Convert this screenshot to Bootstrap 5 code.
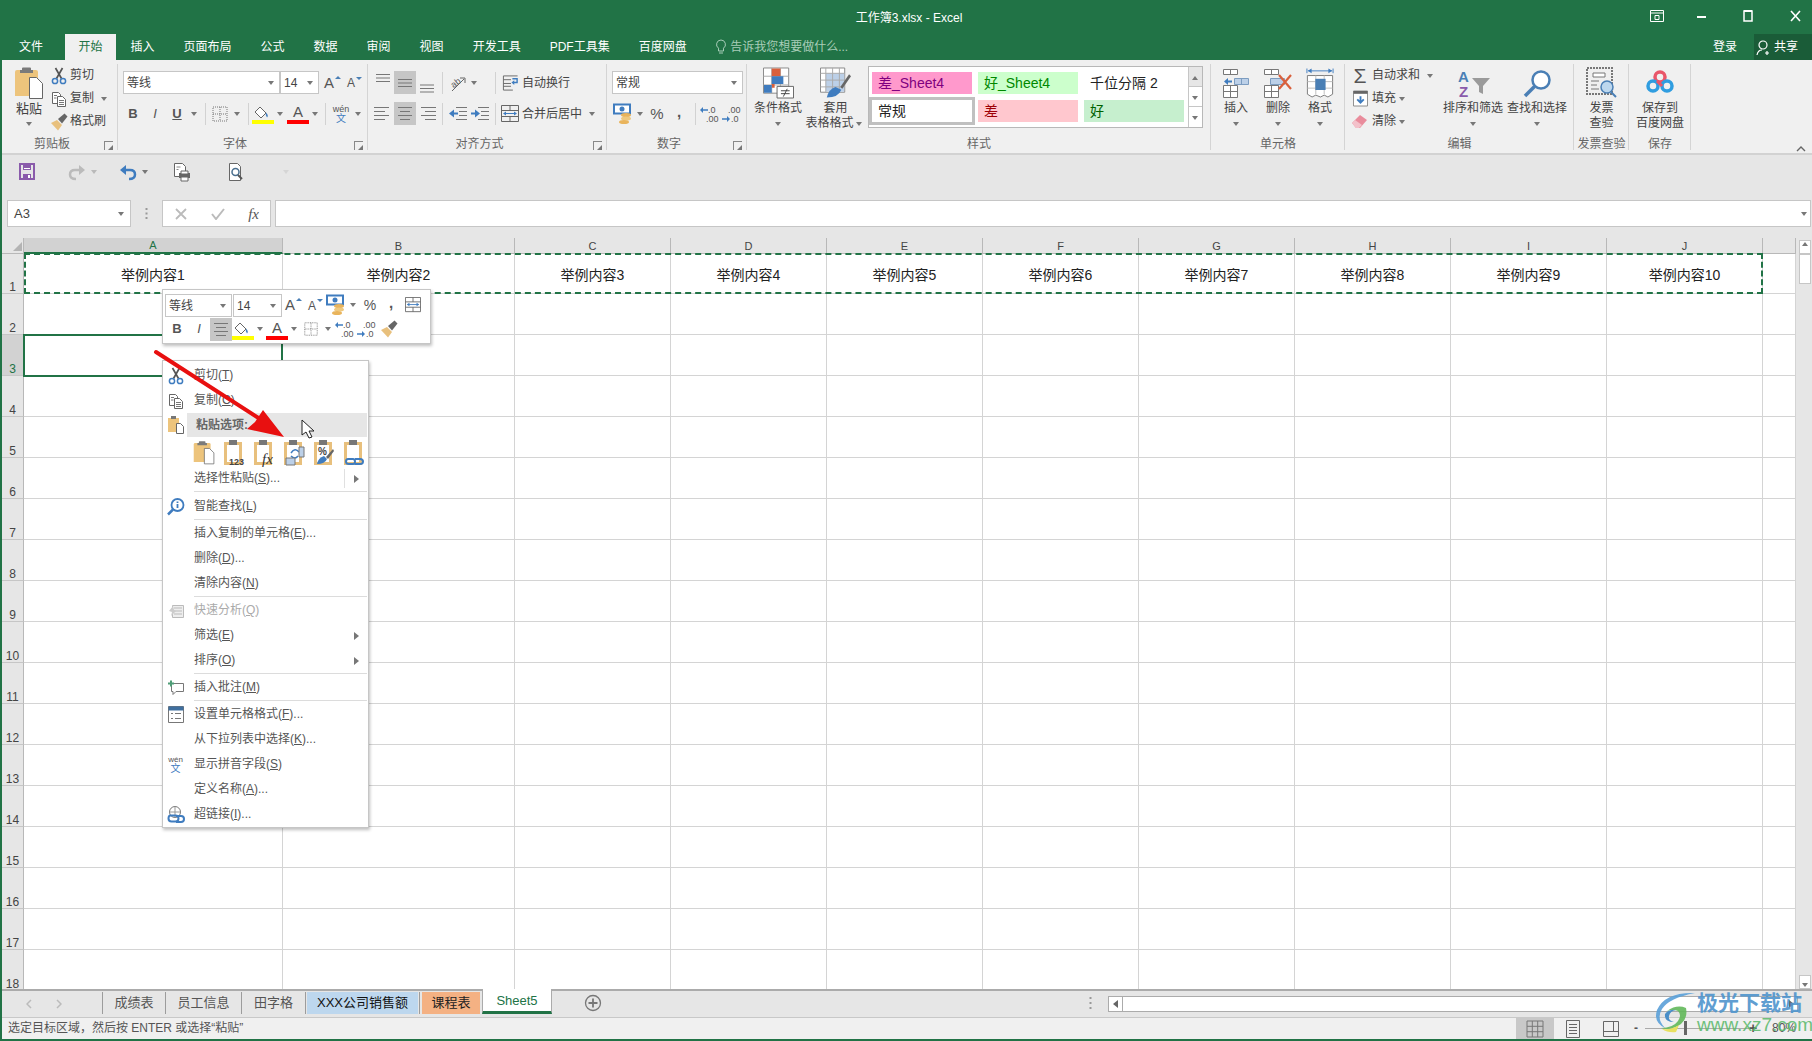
<!DOCTYPE html>
<html lang="zh-CN">
<head>
<meta charset="UTF-8">
<title>工作簿3.xlsx - Excel</title>
<link href="https://cdn.jsdelivr.net/npm/bootstrap@5.3.0/dist/css/bootstrap.min.css" rel="stylesheet">
<style>
html, body { margin: 0; height: 100%; overflow: hidden; }
body { font-family: "Liberation Sans", "Noto Sans CJK SC", sans-serif; font-size: 12px; color: #444; background: #e6e6e6; line-height: 1.2; }
svg { display: block; flex: none; }
.xl-win { position: relative; width: 1812px; height: 1041px; border-left: 2px solid #217346; border-bottom: 2px solid #217346; overflow: hidden; }

/* title + tabs */
.xl-title { height: 34px; background: #217346; color: #fff; }
.xl-title .ttl-txt { flex: 1; text-align: center; font-size: 12px; padding-top: 2px; }
.xl-left { width: 184px; }
.xl-ctrl { width: 180px; height: 34px; }
.xl-ctrl span { position: absolute; top: 9px; }
.xl-tabs { height: 26px; background: #217346; color: #fff; line-height: 26px; position: relative; }
.xl-tab { padding: 0 14.5px; white-space: nowrap; }
.xl-tab.first { padding: 0 15px; margin-left: 2px; }
.xl-tab.cur { background: #f0f0f0; color: #217346; padding: 0 13.5px; margin-left: 7px; }
.xl-tell { color: #a8cdb8; margin-left: 14px; gap: 3px; }
.xl-login { position: absolute; left: 1711px; top: 0; }
.xl-share { position: absolute; left: 1752px; top: 0; width: 58px; height: 26px; background: #1a5c38; gap: 2px; padding-left: 2px; }

/* ribbon */
.xl-ribbon { height: 95px; background: #f0f0f0; border-bottom: 2px solid #d2d2d2; position: relative; }
.rb-grp { position: relative; height: 93px; }
.rb-grp::after { content: ""; position: absolute; right: 0; top: 4px; height: 86px; width: 1px; background: #d4d4d4; }
.rb-body { height: 74px; }
.rb-lab { position: absolute; left: 0; right: 0; top: 76px; text-align: center; color: #666; line-height: 17px; }
.rb-lab.sh { right: 16px; }
.rb-launch { position: absolute; right: 5px; top: 81px; width: 9px; height: 9px; border-left: 1px solid #888; border-top: 1px solid #888; }
.rb-launch::after { content: ""; position: absolute; right: 0; bottom: 0; border-left: 5px solid transparent; border-bottom: 5px solid #777; }
.rows-3 { padding-top: 4px; }
.rows-3 > div { height: 23px; }
.rows-2 { padding-top: 11px; }
.rows-2 > div { height: 23px; margin-bottom: 8px; }
.tx1 { padding-top: 2px; }
.ib { width: 22px; height: 23px; flex: none; display: flex; align-items: center; justify-content: center; color: #555; }
.ib.on { background: #c6c6c6; }
.ib b, .ib i { font-size: 13px; font-family: "Liberation Sans", sans-serif; }
.cr { width: 12px; height: 12px; flex: none; position: relative; display: block; }
.cr::after { content: ""; position: absolute; left: 2.5px; top: 4px; border: 3.5px solid transparent; border-top: 4px solid #777; border-bottom: 0; }
.vs { width: 1px; height: 22px; background: #d2d2d2; flex: none; }
.xl-sel { background: #fff; border: 1px solid #c6c6c6; height: 23px; padding-left: 3px; position: relative; flex: none; font-size: 12px; color: #444; line-height: 23px; }
.xl-sel .cr { position: absolute; right: 2px; top: 5px; }
.bigb { flex: none; display: flex; flex-direction: column; align-items: center; color: #444; text-align: center; }
.big-ic { height: 41px; display: flex; align-items: flex-end; justify-content: center; padding-bottom: 2px; }
.big-tx { line-height: 15px; height: 15px; white-space: nowrap; display: flex; align-items: center; }
.sm-ic { width: 18px; flex: none; display: flex; justify-content: center; margin-right: 2px; }
.w-clip { width: 116px; } .w-font { width: 250px; } .w-align { width: 239px; } .w-num { width: 140px; }
.w-sty { width: 464px; } .w-cell { width: 134px; } .w-edit { width: 229px; } .w-inv { width: 55px; } .w-save { width: 62px; }
.rb-caret-up { position: absolute; left: 1794px; top: 85px; }
.gal { width: 335px; height: 62px; background: #fff; border: 1px solid #b8b8b8; margin-top: 6px; margin-left: 1px; flex: none; position: relative; }
.gal-grid { display: grid; grid-template-columns: repeat(3, 100px); grid-auto-rows: 22px; gap: 6px; padding: 5px 3px; font-size: 14px; }
.gal-c { padding-left: 6px; line-height: 22px; white-space: nowrap; }
.gal-norm { outline: 3px solid #c0c0c0; color: #222; }
.gal-sb { position: absolute; right: 0; top: 0; width: 14px; height: 60px; border-left: 1px solid #c6c6c6; }
.gal-sb div { height: 20px; border-bottom: 1px solid #c6c6c6; position: relative; }
.gal-sb div:first-child { background: #e6e6e6; }
.gal-sb .cr { position: absolute; left: 0; top: 5px; }
.sort-az { width: 14px; font-weight: 700; font-size: 15px; line-height: 15px; margin-right: 1px; }
.sort-az span { display: block; }

/* qat + formula bar */
.xl-qat { height: 45px; padding-bottom: 12px; background: #e6e6e6; }
.xl-fbar { height: 27px; background: #e6e6e6; margin-bottom: 11px; }
.fb-box { background: #fff; border: 1px solid #c6c6c6; height: 27px; position: relative; }
.fb-name { width: 124px; margin-left: 5px; padding-left: 6px; font-size: 13px; line-height: 25px; color: #444; }
.fb-dots { width: 31px; color: #999; }
.fb-btns { width: 109px; padding: 0 11px 0 12px; }
.fb-fx { font-family: "Liberation Serif", serif; font-size: 15px; color: #555; }
.fb-input { width: 1536px; margin-left: 4px; }

/* sheet */
.xl-sheetwrap { height: 751px; position: relative; }
.xl-sheet { width: 1794px; height: 751px; overflow: hidden; background: #fff; }
.xl-tbl { border-collapse: separate; border-spacing: 0; table-layout: fixed; width: 1794px; }
.xl-tbl td { height: 41px; padding: 0; border-right: 1px solid #d4d4d4; border-bottom: 1px solid #d4d4d4; text-align: center; font-size: 14px; color: #222; }
.xl-tbl thead th { height: 16px; background: #e6e6e6; border-right: 1px solid #b8b8b8; border-bottom: 1px solid #b8b8b8; text-align: center; font-weight: 400; font-size: 11px; color: #444; padding: 0; line-height: 14px; }
.xl-tbl thead th.sel { background: #d2d2d2; color: #217346; border-bottom: 2px solid #217346; }
.xl-tbl tbody th { background: #e6e6e6; border-right: 1px solid #b8b8b8; border-bottom: 1px solid #c6c6c6; font-weight: 400; font-size: 12px; color: #444; text-align: center; vertical-align: bottom; padding: 0; line-height: 11px; }
.xl-tbl tbody th.sel { background: #d2d2d2; color: #217346; }
.xl-tbl tr.first td, .xl-tbl tr.first th { height: 40px; }
.xl-tbl tr.first td { padding-top: 3px; }
.corner { position: absolute; left: 11px; top: 4px; border-left: 9px solid transparent; border-bottom: 9px solid #b4b4b4; }
.sel-ants { position: absolute; left: 22px; top: 15px; width: 1739px; height: 41px; border: 2px dashed #217346; pointer-events: none; }
.sel-cell { position: absolute; left: 21px; top: 96px; width: 260px; height: 43px; border: 2px solid #217346; }
.xl-vs { width: 16px; height: 751px; background: #e6e6e6; position: relative; }
.xl-vs .vb { position: absolute; left: 3px; width: 12px; height: 14px; background: #fff; border: 1px solid #c6c6c6; }
.xl-vs .vb .cr { position: absolute; left: -1px; top: 3px; }
.xl-vs .up { top: 2px; transform: scaleY(-1); }
.xl-vs .thumb { position: absolute; left: 3px; top: 16px; width: 12px; height: 30px; background: #fff; border: 1px solid #c6c6c6; }
.xl-vs .dn { bottom: 0; }

/* tab strip + status */
.xl-strip { height: 28px; background: #e6e6e6; border-top: 2px solid #ababab; position: relative; }
.st-nav { width: 100px; padding-left: 24px; gap: 24px; color: #bbb; }
.st-tab { height: 22px; margin-top: 1px; line-height: 21px; font-size: 13px; text-align: center; border-left: 1px solid #9c9c9c; color: #555; flex: none; }
.st-blue { background: #bdd7ee; color: #111; margin-left: 1px; border-left: 0; }
.st-orange { background: #f4b183; color: #222; margin-left: 2px; border-left: 0; }
.st-gap { width: 1px; overflow: hidden; }
.st-cur { background: #fff; color: #217346; height: 25px; margin-top: -2px; padding-top: 1px; border-left: 1px solid #ababab; border-right: 1px solid #ababab; border-bottom: 3px solid #217346; margin-left: 2px; }
.st-plus { position: absolute; left: 582px; top: 3px; }
.st-dots { position: absolute; left: 1087px; top: 5px; }
.st-hs { position: absolute; left: 1106px; top: 5px; width: 690px; height: 16px; background: #fff; border: 1px solid #ababab; }
.st-hs .lb { width: 14px; height: 14px; border-right: 1px solid #ababab; position: relative; }
.tri-l { position: absolute; left: 4px; top: 3px; border: 4px solid transparent; border-right: 5px solid #666; border-left: 0; }
.tri-r { position: absolute; right: 3px; top: 3px; border: 4px solid transparent; border-left: 5px solid #666; border-right: 0; }
.xl-status { height: 22px; background: #f0f0f0; border-top: 1px solid #c8c8c8; position: relative; padding-left: 6px; line-height: 20px; color: #555; }
.sv-btn { position: absolute; top: 0; height: 21px; width: 38px; display: flex; align-items: center; justify-content: center; }
.sv-on { background: #c8c8c8; }
.sz-line { position: absolute; left: 1643px; top: 10px; width: 105px; height: 1px; background: #aaa; }
.sz-thumb { position: absolute; left: 1682px; top: 3px; width: 3px; height: 14px; background: #666; }
.sz-t { position: absolute; top: 0; color: #555; }

/* mini toolbar */
.mini { position: absolute; left: 160px; top: 289px; width: 269px; height: 55px; background: #fff; border: 1px solid #c6c6c6; box-shadow: 1px 2px 3px rgba(0,0,0,.25); padding: 3px 2px; }
.mini-r { height: 24px; }

/* context menu */
.xl-menu.dropdown-menu { display: block; position: absolute; left: 160px; top: 360px; width: 207px; height: 468px; padding: 2px 0 0; margin: 0; border: 1px solid #c6c6c6; border-radius: 0; box-shadow: 1px 2px 3px rgba(0,0,0,.25); font-size: 12px; min-width: 0; }
.xl-menu .dropdown-item { height: 25px; padding: 0; display: flex; align-items: center; color: #555; position: relative; line-height: 25px; }
.m-ic { width: 31px; flex: none; display: flex; justify-content: center; padding-right: 6px; }
.xl-menu .dropdown-item.off { color: #aaa; }
.xl-menu .m-head { height: 24px; line-height: 24px; position: relative; display: flex; align-items: center; }
.m-head span.tx { background: #e6e6e6; margin-left: 24px; width: 180px; padding-left: 9px; font-weight: 700; color: #666; height: 24px; }
.m-head .m-ic { position: absolute; left: 0; }
.m-paste { height: 29px; padding-left: 30px; padding-top: 2px; gap: 8px; }
.m-sub::after { content: ""; position: absolute; right: 9px; top: 9px; border: 4px solid transparent; border-left: 5px solid #777; border-right: 0; }
.m-sub2::before { content: ""; position: absolute; right: 23px; top: 3px; height: 19px; width: 1px; background: #e0e0e0; }
.xl-menu .dropdown-divider { margin: 0 1px 1px 31px; border-top: 1px solid #dcdcdc; opacity: 1; }
.xl-menu .dropdown-divider.dv2 { margin-bottom: 2px; }
.xl-menu u { text-underline-offset: 1px; }
.m-wen { font-size: 8px; line-height: 9px; display: block; text-align: center; }
.m-wen span { color: #3f7cbf; font-size: 10px; }

/* overlays */
.ov-arrow { position: absolute; left: 140px; top: 340px; pointer-events: none; z-index: 1100; }
.ov-cursor { position: absolute; left: 299px; top: 419px; z-index: 1100; }
.wm { position: absolute; left: 1649px; top: 990px; pointer-events: none; width: 162px; height: 46px; z-index: 1100; }
.wm-t1 { position: absolute; left: 46px; top: 0; font-size: 21px; font-weight: 700; color: #4f94cd; white-space: nowrap; line-height: 26px; opacity: .9; }
.wm-t2 { position: absolute; left: 46px; top: 25px; font-size: 19px; color: #58b868; white-space: nowrap; line-height: 20px; opacity: .85; }
</style>
</head>
<body>

<svg width="0" height="0" class="position-absolute">
<defs>
<symbol id="scis" viewBox="0 0 16 18"><path d="M5.500 11.500 11.500 1M10.500 11.500 4.500 1" stroke="#555" stroke-width="1.700" fill="none"/><circle cx="4" cy="14" r="2.600" fill="none" stroke="#3f7cbf" stroke-width="1.500"/><circle cx="12" cy="14" r="2.600" fill="none" stroke="#3f7cbf" stroke-width="1.500"/></symbol>
<symbol id="copy" viewBox="0 0 16 16"><path d="M1.500 1.500h6l2 2v9h-8z" fill="#fff" stroke="#666"/><path d="M6.500 5.500h5l3 3v7h-8z" fill="#fff" stroke="#666"/><path d="M3 4.500h3M3 7h2.500M8 9.500h5M8 11.500h5M8 13.500h5" stroke="#777"/></symbol>
<symbol id="brush" viewBox="0 0 18 18"><path d="M1 10l6-3 5 5-4 5.500z" fill="#e8c07d"/><path d="M8 6l6.500-5.500 3 3L12 10.500z" fill="#666"/></symbol>
<symbol id="paste" viewBox="0 0 30 32"><path d="M1 5q0-2 2-2h19q2 0 2 2v24H1z" fill="#edc47c"/><path d="M8 3V1.500q0-1 1-1h7q1 0 1 1V3h2v3H6V3z" fill="#7a7a7a"/><path d="M15.500 10.500h7l6 6v15h-13z" fill="#fff" stroke="#666"/></symbol>
<symbol id="pasteS" viewBox="0 0 18 20"><path d="M1 3h11v14H1z" fill="#edc47c"/><path d="M4 1h5v3H4z" fill="#777"/><path d="M9.500 8.500h4l3 3v7h-7z" fill="#fff" stroke="#666"/></symbol>
<symbol id="clipF" viewBox="0 0 22 27"><path d="M2.500 4.500h15v20h-15z" fill="none" stroke="#e8c07d" stroke-width="3"/><path d="M6 1h8v5H6z" fill="#777"/></symbol>
<symbol id="alT" viewBox="0 0 22 23"><path d="M4 3.500h14M4 7h14M4 10.500h14" stroke="#777"/></symbol>
<symbol id="alM" viewBox="0 0 22 23"><path d="M4 8.500h14M4 12h14M4 15.500h14" stroke="#777"/></symbol>
<symbol id="alB" viewBox="0 0 22 23"><path d="M4 14h14M4 17.500h14M4 21h14" stroke="#777"/></symbol>
<symbol id="alL" viewBox="0 0 22 23"><path d="M2 5.500h15M2 9.500h11M2 13.500h15M2 17.500h11" stroke="#777"/></symbol>
<symbol id="alC" viewBox="0 0 22 23"><path d="M4 5.500h14M6 9.500h10M4 13.500h14M6 17.500h10" stroke="#777"/></symbol>
<symbol id="alR" viewBox="0 0 22 23"><path d="M5 5.500h15M9 9.500h11M5 13.500h15M9 17.500h11" stroke="#777"/></symbol>
<symbol id="indL" viewBox="0 0 22 23"><path d="M9 5.500h11M12 9.500h8M12 13.500h8M9 17.500h11" stroke="#777"/><path d="M2 11.500l5-4v8z" fill="#3f7cbf"/><path d="M6 11.500h5" stroke="#3f7cbf" stroke-width="2"/></symbol>
<symbol id="indR" viewBox="0 0 22 23"><path d="M9 5.500h11M12 9.500h8M12 13.500h8M9 17.500h11" stroke="#777"/><path d="M11 11.500l-5-4v8z" fill="#3f7cbf"/><path d="M2 11.500h5" stroke="#3f7cbf" stroke-width="2"/></symbol>
<symbol id="wrap" viewBox="0 0 18 18"><path d="M1.500 1.500h15M1.500 5.500h8M1.500 9.500h8M1.500 16.500h10M1.500 1.500v15M9.500 12.500h-8" stroke="#666" fill="none"/><path d="M11 4.500h5v4h-4" stroke="#3f7cbf" fill="none" stroke-width="1.500"/><path d="M10 8.500l3-2.500v5z" fill="#3f7cbf"/></symbol>
<symbol id="merge" viewBox="0 0 18 18"><path d="M.5.500h17v16H.5zM.5 5.500h17M.5 11.500h17M9 .5v5M9 11.500v5" stroke="#666" fill="none"/><path d="M3 8.500h12" stroke="#3f7cbf"/><path d="M2 8.500l3-2v4zM16 8.500l-3-2v4z" fill="#3f7cbf"/></symbol>
<symbol id="money" viewBox="0 0 20 22"><path d="M1 1.500h16v9H1z" fill="#fff" stroke="#3f7cbf" stroke-width="2"/><circle cx="9" cy="6" r="2.500" fill="#3f7cbf"/><ellipse cx="13" cy="12" rx="5" ry="2" fill="#e9b45c"/><ellipse cx="13" cy="15.500" rx="5" ry="2" fill="#efc97f"/><ellipse cx="11" cy="19" rx="5" ry="2" fill="#e9b45c"/></symbol>
<symbol id="bucket" viewBox="0 0 18 14"><path d="M8 1l6 6-5 5-6-6z" fill="#fff" stroke="#666"/><path d="M14 6.500q3 3 1 5-2-2-1-5z" fill="#3f7cbf"/></symbol>
<symbol id="borders" viewBox="0 0 18 18"><path d="M2 2h14v14H2zM9 2v14M2 9h14" fill="none" stroke="#777" stroke-dasharray="1 1"/></symbol>
<symbol id="condf" viewBox="0 0 32 32"><path d="M.5.500h26v26H.5z" fill="#fff" stroke="#888"/><path d="M9 .5v26M18 .5v26M.5 9h26M.5 18h26" stroke="#aaa"/><path d="M9 1h9v8H9zM9 17h3v4H9z" fill="#d9603c"/><path d="M9 9h12v8H9zM1 18h8v8H1z" fill="#3f7cbf"/><path d="M14.500 19.500h17v12h-17z" fill="#fff" stroke="#666"/><path d="M18.500 24h9M18.500 27h9M25 22l-4 8" stroke="#444"/></symbol>
<symbol id="tblf" viewBox="0 0 32 32"><path d="M.5.500h25v25H.5z" fill="#fff" stroke="#888"/><path d="M6 6h19v19H6z" fill="#bcd0e8"/><path d="M6 .5v25M13 .5v25M20 .5v25M.5 6h25M.5 13h25M.5 20h25" stroke="#aaa"/><path d="M21 20L30 7l2 2-9 13z" fill="#666"/><path d="M7 31q2-9 9-11l6 3q-3 8-15 8z" fill="#3f7cbf"/></symbol>
<symbol id="cIns" viewBox="0 0 28 30"><path d="M1.500.5h14v5h-14zM8.500.5v5M1.500 16.500h14v12h-14zM8.500 16.500v12M1.500 22.500h14" fill="#fff" stroke="#777"/><path d="M12.500 9.500h14v6h-14zM19.500 9.500v6" fill="#bcd0e8" stroke="#7c9cc0"/><path d="M2 12.500l4-3.500v7z" fill="#3f7cbf"/><path d="M5 12.500h5" stroke="#3f7cbf" stroke-width="2"/></symbol>
<symbol id="cDel" viewBox="0 0 30 30"><path d="M1.500.5h14v5h-14zM8.500.5v5M1.500 16.500h14v12h-14zM8.500 16.500v12M1.500 22.500h14" fill="#fff" stroke="#777"/><path d="M7.500 9.500h14v6h-14z" fill="#bcd0e8" stroke="#7c9cc0"/><path d="M16 6l12 14M28 6L16 20" stroke="#d9603c" stroke-width="2.200"/></symbol>
<symbol id="cFmt" viewBox="0 0 30 33"><path d="M1 1v5M29 1v5M2 3.500h26" stroke="#3f7cbf" fill="none"/><path d="M2 3.500l4-2.500v5zM28 3.500l-4-2.500v5z" fill="#3f7cbf"/><path d="M1.500 8.500h27v20l-5 3-4-2-4 2-5-2-4 2-5-3z" fill="#fff" stroke="#777"/><path d="M10.500 8.500v20M19.500 8.500v20M1.500 15h27M1.500 22h27" stroke="#bbb"/><path d="M10 12h11v12H10z" fill="#4a7fb5"/></symbol>
<symbol id="fillD" viewBox="0 0 16 17"><path d="M.5 .5h15v16H.5z" fill="#fff" stroke="#888"/><path d="M.5.500h15v3H.5z" fill="#666"/><path d="M8 6v7M4.500 9.500L8 13l3.500-3.500" stroke="#3f7cbf" stroke-width="2" fill="none"/></symbol>
<symbol id="eraser" viewBox="0 0 18 15"><path d="M1 9l8-8 7 5-7 8H5z" fill="#e98c9c"/><path d="M1 9l3-3 7 5-3 3H5z" fill="#f3c1ca"/></symbol>
<symbol id="funnel" viewBox="0 0 18 18"><path d="M0 1h18l-7 8v8l-4-2V9z" fill="#9a9a9a"/></symbol>
<symbol id="find" viewBox="0 0 28 30"><circle cx="18" cy="11" r="8.500" fill="#fff" stroke="#4a7fb5" stroke-width="2.500"/><path d="M11.500 17.500L2 27" stroke="#4a7fb5" stroke-width="3.500"/></symbol>
<symbol id="inv" viewBox="0 0 32 32"><path d="M1 1h25v26H1z" fill="#efefef" stroke="#777" stroke-width="2" stroke-dasharray="2 1"/><path d="M7 6h12v4H7z" fill="#fff" stroke="#777"/><path d="M5 14h8M5 18h6M5 22h8" stroke="#777"/><circle cx="21" cy="20" r="6" fill="#bcd7ee" stroke="#4a7fb5" stroke-width="1.500"/><path d="M25 25l5 5" stroke="#4a7fb5" stroke-width="2"/></symbol>
<symbol id="baidu" viewBox="0 0 28 26"><circle cx="14" cy="8" r="5" fill="none" stroke="#e9566a" stroke-width="3.500"/><circle cx="7" cy="17" r="5" fill="none" stroke="#2f9de0" stroke-width="3.500"/><circle cx="21" cy="17" r="5" fill="none" stroke="#2f9de0" stroke-width="3.500"/><path d="M11 12l5 5" stroke="#e9566a" stroke-width="3"/></symbol>
<symbol id="save" viewBox="0 0 16 17"><path d="M1 1h14v15H1z" fill="none" stroke="#8a5bab" stroke-width="2"/><path d="M4 1h8v6H4z" fill="#8a5bab"/><path d="M5 5h6v1H5z" fill="#fff"/><path d="M4 11h8v5H4z" fill="#8a5bab"/><path d="M9 12h2v3H9z" fill="#fff"/></symbol>
<symbol id="undo" viewBox="0 0 18 18"><path d="M4 7h7q5 0 5 4.500T10 16" fill="none" stroke="currentColor" stroke-width="2.500"/><path d="M1 7l6-5v10z" fill="currentColor"/></symbol>
<symbol id="printp" viewBox="0 0 18 20"><path d="M1.500 1.500h8l3 3v10h-11z" fill="#fff" stroke="#666"/><path d="M6 11h11v5H6z" fill="#666"/><path d="M8 9h7v3H8zM8 15h7v4H8z" fill="#fff" stroke="#666"/><path d="M3.500 5h4M3.500 7.500h2" stroke="#888"/></symbol>
<symbol id="prevw" viewBox="0 0 18 20"><path d="M2.500 1.500h8l3 3v14h-11z" fill="#fff" stroke="#666"/><circle cx="8.500" cy="10" r="3.500" fill="#fff" stroke="#4a6f8f" stroke-width="1.500"/><path d="M11 13l4 4" stroke="#555" stroke-width="2"/></symbol>
<symbol id="smart" viewBox="0 0 18 18"><circle cx="10.500" cy="7" r="6" fill="#fff" stroke="#3f7cbf" stroke-width="1.800"/><path d="M6 11.500L1 16.500" stroke="#3f7cbf" stroke-width="2.500"/><path d="M10.500 3.500v1.500M10.500 6v4" stroke="#3f7cbf" stroke-width="1.800"/></symbol>
<symbol id="quick" viewBox="0 0 16 14"><path d="M4.500 1.500h11v12h-11z" fill="#eee" stroke="#bbb"/><path d="M6 4h8M6 7h8M6 10h8" stroke="#bbb"/><path d="M1 7l4-5 1 4 2 1-5 5 1-4z" fill="#ccc"/></symbol>
<symbol id="note" viewBox="0 0 16 16"><path d="M3.500 3.500h12v8H8l-3 3v-3H3.500z" fill="#fff" stroke="#777"/><path d="M3 .5v6M0 3.500h6" stroke="#4f9d77" stroke-width="2"/></symbol>
<symbol id="fmtc" viewBox="0 0 16 17"><path d="M.5.500h15v16H.5z" fill="#fff" stroke="#777"/><path d="M.5.500h15v4H.5z" fill="#3f6f9f"/><path d="M3 7.500h2M7 7.500h6M3 12.500h2M7 12.500h6" stroke="#777"/></symbol>
<symbol id="link" viewBox="0 0 18 18"><circle cx="8" cy="6" r="5.500" fill="#fff" stroke="#777"/><path d="M2.500 6h11M8 .5v11" stroke="#999"/><path d="M2.500 9.500h6q3 0 3 3t-3 3h-4q-3 0-3-3t2-3" fill="none" stroke="#3f7cbf" stroke-width="2"/><path d="M9 10h5q3 0 3 3t-3 3H9" fill="none" stroke="#3f7cbf" stroke-width="2"/></symbol>
<symbol id="decL" viewBox="0 0 20 20"><text x="8" y="9" font-size="9" fill="#555" font-family="Liberation Sans">.0</text><text x="6" y="18" font-size="9" fill="#555" font-family="Liberation Sans">.00</text><path d="M2 6h6" stroke="#3f7cbf" stroke-width="1.500"/><path d="M0 6l3-3v6z" fill="#3f7cbf"/></symbol>
<symbol id="decR" viewBox="0 0 20 20"><text x="6" y="9" font-size="9" fill="#555" font-family="Liberation Sans">.00</text><text x="9" y="18" font-size="9" fill="#555" font-family="Liberation Sans">.0</text><path d="M0 15h6" stroke="#3f7cbf" stroke-width="1.500"/><path d="M8 15l-3-3v6z" fill="#3f7cbf"/></symbol>
</defs>
</svg>

<div class="xl-win">

  <div class="xl-title d-flex align-items-center position-relative">
    <div class="xl-left"></div>
    <div class="ttl-txt">工作簿3.xlsx - Excel</div>
    <div class="xl-ctrl">
      <span style="left:1648px"><svg width="14" height="14"><path d="M.5 1.500h13v11H.5zM.5 4h13M5 6.500h4v4H5z" fill="none" stroke="#fff"/></svg></span>
      <span style="left:1695px;top:16px"><svg width="9" height="3"><path d="M0 1h9" stroke="#fff" stroke-width="2"/></svg></span>
      <span style="left:1741px"><svg width="10" height="14"><path d="M1 2h8v10H1z" fill="none" stroke="#fff" stroke-width="1.500"/><path d="M1 2h8" stroke="#fff" stroke-width="2"/></svg></span>
      <span style="left:1788px"><svg width="11" height="14"><path d="M1 2l9 10M10 2l-9 10" stroke="#fff" stroke-width="1.600"/></svg></span>
    </div>
  </div>

  <div class="xl-tabs d-flex align-items-center">
    <div class="xl-tab first">文件</div>
    <div class="xl-tab cur">开始</div>
    <div class="xl-tab">插入</div>
    <div class="xl-tab">页面布局</div>
    <div class="xl-tab">公式</div>
    <div class="xl-tab">数据</div>
    <div class="xl-tab">审阅</div>
    <div class="xl-tab">视图</div>
    <div class="xl-tab">开发工具</div>
    <div class="xl-tab">PDF工具集</div>
    <div class="xl-tab">百度网盘</div>
    <div class="xl-tell d-flex align-items-center">
      <svg width="12" height="16"><path d="M6 1a4.500 4.500 0 0 0-2.500 8.200V12h5V9.200A4.500 4.500 0 0 0 6 1zM4 14h4" fill="none" stroke="#a8cdb8"/></svg>
      <span>告诉我您想要做什么...</span>
    </div>
    <div class="xl-login">登录</div>
    <div class="xl-share d-flex align-items-center">
      <svg width="16" height="17"><circle cx="7" cy="6" r="4" fill="none" stroke="#fff" stroke-width="1.200"/><path d="M1 16q1-5 5-5M11 12v4M9 14h4" fill="none" stroke="#fff" stroke-width="1.200"/></svg>
      <span>共享</span>
    </div>
  </div>

  <div class="xl-ribbon d-flex">
    <div class="rb-grp w-clip">
      <div class="rb-body d-flex">
        <div class="bigb ms-2" style="width:38px">
          <div class="big-ic"><svg width="30" height="32"><use href="#paste"/></svg></div>
          <div class="big-tx" style="font-size:13px">粘贴</div>
          <div class="big-tx"><span class="cr"></span></div>
        </div>
        <div class="rows-3" style="margin-left:2px">
          <div class="d-flex align-items-center"><span class="sm-ic"><svg width="16" height="18"><use href="#scis"/></svg></span>剪切</div>
          <div class="d-flex align-items-center"><span class="sm-ic"><svg width="16" height="16"><use href="#copy"/></svg></span>复制<span class="cr ms-1"></span></div>
          <div class="d-flex align-items-center"><span class="sm-ic"><svg width="18" height="18"><use href="#brush"/></svg></span>格式刷</div>
        </div>
      </div>
      <div class="rb-lab sh">剪贴板</div><span class="rb-launch"></span>
    </div>

    <div class="rb-grp w-font">
      <div class="rb-body rows-2">
        <div class="d-flex align-items-center" style="padding-left:5px">
          <div class="xl-sel" style="width:157px">等线<span class="cr"></span></div>
          <div class="xl-sel" style="width:39px">14<span class="cr"></span></div>
          <div class="ib" style="margin-left:3px"><span style="font-size:15px">A</span><svg width="8" height="6" style="margin-top:-10px"><path d="M4 1l3 3H1z" fill="#4a7fb5"/></svg></div>
          <div class="ib"><span style="font-size:12px;margin-top:2px">A</span><svg width="8" height="6" style="margin-top:-10px"><path d="M4 5l3-3H1z" fill="#4a7fb5"/></svg></div>
        </div>
        <div class="d-flex align-items-center" style="padding-left:4px">
          <div class="ib"><b>B</b></div><div class="ib"><i>I</i></div><div class="ib"><u style="font-weight:700;font-size:13px">U</u></div><span class="cr"></span>
          <div class="vs" style="margin:0 3px 0 5px"></div>
          <div class="ib"><svg width="18" height="18"><use href="#borders"/></svg></div><span class="cr"></span>
          <div class="vs" style="margin:0 3px 0 5px"></div>
          <div class="ib d-block pt-1"><svg width="18" height="14"><use href="#bucket"/></svg><div style="height:4px;background:#ff0"></div></div><span class="cr"></span>
          <div class="ib d-block text-center" style="margin-left:1px;line-height:13px;padding-top:3px"><span style="font-size:15px">A</span><div style="height:4px;background:#f00"></div></div><span class="cr"></span>
          <div class="vs" style="margin:0 4px"></div>
          <div class="ib d-block text-center" style="font-size:9px;line-height:10px;padding-top:2px">wén<div style="color:#3f7cbf;font-size:10px">文</div></div><span class="cr"></span>
        </div>
      </div>
      <div class="rb-lab sh">字体</div><span class="rb-launch"></span>
    </div>

    <div class="rb-grp w-align">
      <div class="rb-body rows-2">
        <div class="d-flex align-items-center" style="padding-left:4px">
          <div class="ib"><svg width="22" height="23"><use href="#alT"/></svg></div>
          <div class="ib on"><svg width="22" height="23"><use href="#alM"/></svg></div>
          <div class="ib"><svg width="22" height="23"><use href="#alB"/></svg></div>
          <div class="vs" style="margin:0 3px 0 4px"></div>
          <div class="ib"><svg width="18" height="18" style="overflow:visible"><text x="3" y="13" font-size="9" fill="#555" transform="rotate(-38 6 10)" font-family="Liberation Sans">ab</text><path d="M4 17L16 5" stroke="#666"/><path d="M12 4h5v5" fill="none" stroke="#666"/></svg></div><span class="cr"></span>
          <div class="vs" style="margin:0 5px 0 15px"></div>
          <span class="sm-ic" style="margin-right:3px"><svg width="17" height="18"><use href="#wrap"/></svg></span><span class="tx1">自动换行</span>
        </div>
        <div class="d-flex align-items-center" style="padding-left:4px">
          <div class="ib"><svg width="22" height="23"><use href="#alL"/></svg></div>
          <div class="ib on"><svg width="22" height="23"><use href="#alC"/></svg></div>
          <div class="ib"><svg width="22" height="23"><use href="#alR"/></svg></div>
          <div class="vs" style="margin:0 4px"></div>
          <div class="ib"><svg width="22" height="23"><use href="#indL"/></svg></div>
          <div class="ib"><svg width="22" height="23"><use href="#indR"/></svg></div>
          <div class="vs" style="margin:0 5px 0 4px"></div>
          <span class="sm-ic" style="margin-right:3px"><svg width="18" height="18"><use href="#merge"/></svg></span><span class="tx1">合并后居中</span><span class="cr ms-1"></span>
        </div>
      </div>
      <div class="rb-lab sh">对齐方式</div><span class="rb-launch"></span>
    </div>

    <div class="rb-grp w-num">
      <div class="rb-body rows-2">
        <div style="padding-left:5px"><div class="xl-sel" style="width:131px">常规<span class="cr"></span></div></div>
        <div class="d-flex align-items-center" style="padding-left:5px">
          <div class="ib"><svg width="20" height="22"><use href="#money"/></svg></div><span class="cr"></span>
          <div class="ib" style="font-size:15px">%</div>
          <div class="ib" style="font-size:15px;font-weight:700;padding-bottom:4px">,</div>
          <div class="vs" style="margin:0 3px 0 5px"></div>
          <div class="ib"><svg width="20" height="20"><use href="#decL"/></svg></div>
          <div class="ib"><svg width="20" height="20"><use href="#decR"/></svg></div>
        </div>
      </div>
      <div class="rb-lab sh">数字</div><span class="rb-launch"></span>
    </div>

    <div class="rb-grp w-sty">
      <div class="rb-body d-flex" style="padding-left:5px">
        <div class="bigb" style="width:52px">
          <div class="big-ic"><svg width="31" height="32"><use href="#condf"/></svg></div>
          <div class="big-tx">条件格式</div>
          <div class="big-tx"><span class="cr"></span></div>
        </div>
        <div class="bigb" style="width:63px">
          <div class="big-ic"><svg width="31" height="32"><use href="#tblf"/></svg></div>
          <div class="big-tx">套用</div>
          <div class="big-tx">表格格式<span class="cr"></span></div>
        </div>
        <div class="gal">
          <div class="gal-grid">
            <div class="gal-c" style="background:#f9c;color:#800080">差_Sheet4</div>
            <div class="gal-c" style="background:#cfc;color:#080">好_Sheet4</div>
            <div class="gal-c" style="color:#222">千位分隔 2</div>
            <div class="gal-c gal-norm">常规</div>
            <div class="gal-c" style="background:#ffc7ce;color:#9c0006">差</div>
            <div class="gal-c" style="background:#c6efce;color:#006100">好</div>
          </div>
          <div class="gal-sb">
            <div><span class="cr" style="transform:scaleY(-1)"></span></div>
            <div><span class="cr"></span></div>
            <div style="border-bottom:0"><span class="cr"></span></div>
          </div>
        </div>
      </div>
      <div class="rb-lab">样式</div>
    </div>

    <div class="rb-grp w-cell">
      <div class="rb-body d-flex ps-1">
        <div class="bigb" style="width:42px"><div class="big-ic"><svg width="28" height="30"><use href="#cIns"/></svg></div><div class="big-tx">插入</div><div class="big-tx"><span class="cr"></span></div></div>
        <div class="bigb" style="width:42px"><div class="big-ic"><svg width="30" height="30"><use href="#cDel"/></svg></div><div class="big-tx">删除</div><div class="big-tx"><span class="cr"></span></div></div>
        <div class="bigb" style="width:42px"><div class="big-ic"><svg width="28" height="32"><use href="#cFmt"/></svg></div><div class="big-tx">格式</div><div class="big-tx"><span class="cr"></span></div></div>
      </div>
      <div class="rb-lab">单元格</div>
    </div>

    <div class="rb-grp w-edit">
      <div class="rb-body d-flex" style="padding-left:6px">
        <div class="rows-3" style="width:90px">
          <div class="d-flex align-items-center"><span class="sm-ic" style="font-size:21px;line-height:20px;color:#555;margin-right:3px">Σ</span>自动求和<span class="cr ms-1"></span></div>
          <div class="d-flex align-items-center"><span class="sm-ic" style="margin-right:3px"><svg width="15" height="17"><use href="#fillD"/></svg></span>填充<span class="cr"></span></div>
          <div class="d-flex align-items-center"><span class="sm-ic" style="margin-right:3px"><svg width="18" height="15"><use href="#eraser"/></svg></span>清除<span class="cr"></span></div>
        </div>
        <div class="bigb" style="width:64px">
          <div class="big-ic">
            <div class="sort-az"><span style="color:#4a7fb5">A</span><span style="color:#8a5bab">Z</span></div>
            <svg width="18" height="18" class="mb-1"><use href="#funnel"/></svg>
          </div>
          <div class="big-tx">排序和筛选</div>
          <div class="big-tx"><span class="cr"></span></div>
        </div>
        <div class="bigb" style="width:64px">
          <div class="big-ic"><svg width="28" height="30"><use href="#find"/></svg></div>
          <div class="big-tx">查找和选择</div>
          <div class="big-tx"><span class="cr"></span></div>
        </div>
      </div>
      <div class="rb-lab">编辑</div>
    </div>

    <div class="rb-grp w-inv">
      <div class="rb-body d-flex justify-content-center">
        <div class="bigb"><div class="big-ic"><svg width="32" height="32"><use href="#inv"/></svg></div><div class="big-tx">发票</div><div class="big-tx">查验</div></div>
      </div>
      <div class="rb-lab">发票查验</div>
    </div>

    <div class="rb-grp w-save">
      <div class="rb-body d-flex justify-content-center">
        <div class="bigb"><div class="big-ic" style="padding-bottom:6px"><svg width="28" height="26"><use href="#baidu"/></svg></div><div class="big-tx">保存到</div><div class="big-tx">百度网盘</div></div>
      </div>
      <div class="rb-lab">保存</div>
    </div>

    <svg class="rb-caret-up" width="10" height="7"><path d="M1 6l4-4 4 4" fill="none" stroke="#666" stroke-width="1.400"/></svg>
  </div>

  <div class="xl-qat d-flex align-items-center">
    <div class="ib" style="margin-left:14px"><svg width="16" height="17"><use href="#save"/></svg></div>
    <div class="ib" style="margin-left:28px;color:#bbb"><svg width="18" height="18" style="transform:scaleX(-1)"><use href="#undo"/></svg></div><span class="cr" style="opacity:.4"></span>
    <div class="ib" style="margin-left:17px;color:#3f7cbf"><svg width="18" height="18"><use href="#undo"/></svg></div><span class="cr"></span>
    <div class="ib" style="margin-left:20px"><svg width="18" height="20"><use href="#printp"/></svg></div>
    <div class="ib" style="margin-left:32px"><svg width="18" height="20"><use href="#prevw"/></svg></div>
    <span class="cr" style="margin-left:33px;opacity:.15"></span>
  </div>

  <div class="xl-fbar d-flex">
    <div class="fb-box fb-name">A3<span class="cr position-absolute" style="right:3px;top:7px"></span></div>
    <div class="fb-dots d-flex align-items-center justify-content-center"><svg width="3" height="13"><path d="M1.500 1v2M1.500 5.500v2M1.500 10v2" stroke="#999" stroke-width="2"/></svg></div>
    <div class="fb-box fb-btns d-flex align-items-center justify-content-between">
      <svg width="12" height="12"><path d="M1 1l10 10M11 1L1 11" stroke="#bbb" stroke-width="1.800"/></svg>
      <svg width="14" height="12"><path d="M1 6l4 5 8-10" stroke="#bbb" stroke-width="2" fill="none"/></svg>
      <i class="fb-fx">fx</i>
    </div>
    <div class="fb-box fb-input"><span class="cr position-absolute" style="right:0;top:7px"></span></div>
  </div>

  <div class="xl-sheetwrap d-flex">
    <div class="xl-sheet">
      <table class="xl-tbl">
        <colgroup><col style="width:22px"><col style="width:259px"><col style="width:232px"><col style="width:156px"><col style="width:156px"><col style="width:156px"><col style="width:156px"><col style="width:156px"><col style="width:156px"><col style="width:156px"><col style="width:156px"><col style="width:33px"></colgroup>
        <thead><tr><th></th><th class="sel">A</th><th>B</th><th>C</th><th>D</th><th>E</th><th>F</th><th>G</th><th>H</th><th>I</th><th>J</th><th></th></tr></thead>
        <tbody>
          <tr class="first"><th>1</th><td>举例内容1</td><td>举例内容2</td><td>举例内容3</td><td>举例内容4</td><td>举例内容5</td><td>举例内容6</td><td>举例内容7</td><td>举例内容8</td><td>举例内容9</td><td>举例内容10</td><td></td></tr>
          <tr><th>2</th><td></td><td></td><td></td><td></td><td></td><td></td><td></td><td></td><td></td><td></td><td></td></tr>
          <tr><th class="sel">3</th><td></td><td></td><td></td><td></td><td></td><td></td><td></td><td></td><td></td><td></td><td></td></tr>
          <tr><th>4</th><td></td><td></td><td></td><td></td><td></td><td></td><td></td><td></td><td></td><td></td><td></td></tr>
          <tr><th>5</th><td></td><td></td><td></td><td></td><td></td><td></td><td></td><td></td><td></td><td></td><td></td></tr>
          <tr><th>6</th><td></td><td></td><td></td><td></td><td></td><td></td><td></td><td></td><td></td><td></td><td></td></tr>
          <tr><th>7</th><td></td><td></td><td></td><td></td><td></td><td></td><td></td><td></td><td></td><td></td><td></td></tr>
          <tr><th>8</th><td></td><td></td><td></td><td></td><td></td><td></td><td></td><td></td><td></td><td></td><td></td></tr>
          <tr><th>9</th><td></td><td></td><td></td><td></td><td></td><td></td><td></td><td></td><td></td><td></td><td></td></tr>
          <tr><th>10</th><td></td><td></td><td></td><td></td><td></td><td></td><td></td><td></td><td></td><td></td><td></td></tr>
          <tr><th>11</th><td></td><td></td><td></td><td></td><td></td><td></td><td></td><td></td><td></td><td></td><td></td></tr>
          <tr><th>12</th><td></td><td></td><td></td><td></td><td></td><td></td><td></td><td></td><td></td><td></td><td></td></tr>
          <tr><th>13</th><td></td><td></td><td></td><td></td><td></td><td></td><td></td><td></td><td></td><td></td><td></td></tr>
          <tr><th>14</th><td></td><td></td><td></td><td></td><td></td><td></td><td></td><td></td><td></td><td></td><td></td></tr>
          <tr><th>15</th><td></td><td></td><td></td><td></td><td></td><td></td><td></td><td></td><td></td><td></td><td></td></tr>
          <tr><th>16</th><td></td><td></td><td></td><td></td><td></td><td></td><td></td><td></td><td></td><td></td><td></td></tr>
          <tr><th>17</th><td></td><td></td><td></td><td></td><td></td><td></td><td></td><td></td><td></td><td></td><td></td></tr>
          <tr><th>18</th><td></td><td></td><td></td><td></td><td></td><td></td><td></td><td></td><td></td><td></td><td></td></tr>
        </tbody>
      </table>
      <span class="corner"></span>
      <div class="sel-ants"></div>
      <div class="sel-cell"></div>
    </div>
    <div class="xl-vs">
      <div class="vb up"><span class="cr"></span></div>
      <div class="thumb"></div>
      <div class="vb dn"><span class="cr"></span></div>
    </div>
  </div>

  <div class="xl-strip d-flex">
    <div class="st-nav d-flex align-items-center">
      <svg width="6" height="10"><path d="M5 1L1 5l4 4" fill="none" stroke="#bbb" stroke-width="1.500"/></svg>
      <svg width="6" height="10"><path d="M1 1l4 4-4 4" fill="none" stroke="#bbb" stroke-width="1.500"/></svg>
    </div>
    <div class="st-tab" style="width:63px">成绩表</div>
    <div class="st-tab" style="width:76px">员工信息</div>
    <div class="st-tab" style="width:64px">田字格</div>
    <div class="st-tab st-gap"></div>
    <div class="st-tab st-blue" style="width:111px">XXX公司销售额</div>
    <div class="st-tab st-gap ms-px" style="margin-left:1px"></div>
    <div class="st-tab st-orange" style="width:58px">课程表</div>
    <div class="st-tab st-cur" style="width:70px">Sheet5</div>
    <svg class="st-plus" width="18" height="18"><circle cx="9" cy="9" r="7.500" fill="none" stroke="#777" stroke-width="1.300"/><path d="M9 4.500v9M4.500 9h9" stroke="#777" stroke-width="1.800"/></svg>
    <svg class="st-dots" width="3" height="14"><path d="M1.500 1v2M1.500 6v2M1.500 11v2" stroke="#999" stroke-width="2"/></svg>
    <div class="st-hs"><div class="lb"><span class="tri-l"></span></div><span class="tri-r"></span></div>
  </div>

  <div class="xl-status">
    选定目标区域，然后按 ENTER 或选择“粘贴”
    <div class="sv-btn sv-on" style="left:1514px"><svg width="18" height="18"><path d="M1 1h16v16H1zM6.300 1v16M11.700 1v16M1 6.300h16M1 11.700h16" fill="none" stroke="#777"/></svg></div>
    <div class="sv-btn" style="left:1552px"><svg width="14" height="18"><path d="M.5.500h13v17H.5z" fill="none" stroke="#666"/><path d="M3 4.500h8M3 7.500h8M3 10.500h8M3 13.500h8" stroke="#666"/></svg></div>
    <div class="sv-btn" style="left:1590px"><svg width="16" height="16"><path d="M.5.500h15v15H.5zM.5 10.500h15M10.500.5v10" fill="none" stroke="#666"/></svg></div>
    <span class="sz-t" style="left:1632px;font-weight:700">-</span>
    <span class="sz-line"></span><span class="sz-thumb"></span>
    <span class="sz-t" style="left:1747px;font-weight:700;font-size:14px">+</span>
    <span class="sz-t" style="left:1770px">80%</span>
  </div>

  <!-- floating mini toolbar -->
  <div class="mini">
    <div class="mini-r d-flex align-items-center">
      <div class="xl-sel" style="width:67px">等线<span class="cr"></span></div>
      <div class="xl-sel" style="width:49px;margin-left:1px">14<span class="cr"></span></div>
      <div class="ib" style="margin-left:1px"><span style="font-size:15px">A</span><svg width="8" height="6" style="margin-top:-10px"><path d="M4 1l3 3H1z" fill="#4a7fb5"/></svg></div>
      <div class="ib"><span style="font-size:12px;margin-top:2px">A</span><svg width="8" height="6" style="margin-top:-10px"><path d="M4 5l3-3H1z" fill="#4a7fb5"/></svg></div>
      <div class="ib" style="margin-left:-2px"><svg width="20" height="22"><use href="#money"/></svg></div><span class="cr"></span>
      <div class="ib" style="font-size:14px">%</div>
      <div class="ib" style="font-size:15px;font-weight:700;padding-bottom:4px;margin-left:-1px">,</div>
      <div class="ib"><svg width="16" height="16"><use href="#merge"/></svg></div>
    </div>
    <div class="mini-r d-flex align-items-center">
      <div class="ib" style="margin-left:1px"><b>B</b></div><div class="ib"><i>I</i></div><div class="ib on"><svg width="22" height="23"><use href="#alC"/></svg></div>
      <div class="ib d-block pt-1"><svg width="18" height="14"><use href="#bucket"/></svg><div style="height:4px;background:#ff0"></div></div><span class="cr"></span>
      <div class="ib d-block text-center" style="line-height:13px;padding-top:3px"><span style="font-size:15px">A</span><div style="height:4px;background:#f00"></div></div><span class="cr"></span>
      <div class="ib"><svg width="16" height="16"><use href="#borders"/></svg></div><span class="cr"></span>
      <div class="ib"><svg width="20" height="20"><use href="#decL"/></svg></div>
      <div class="ib"><svg width="20" height="20"><use href="#decR"/></svg></div>
      <div class="ib"><svg width="18" height="18"><use href="#brush"/></svg></div>
    </div>
  </div>

  <!-- context menu -->
  <div class="dropdown-menu xl-menu">
    <a class="dropdown-item"><span class="m-ic"><svg width="16" height="18"><use href="#scis"/></svg></span>剪切(<u>T</u>)</a>
    <a class="dropdown-item"><span class="m-ic"><svg width="16" height="16"><use href="#copy"/></svg></span>复制(<u>C</u>)</a>
    <div class="m-head"><span class="m-ic"><svg width="18" height="20"><use href="#pasteS"/></svg></span><span class="tx">粘贴选项:</span></div>
    <div class="m-paste d-flex">
      <svg width="22" height="27"><use href="#paste"/></svg>
      <svg width="22" height="27" style="overflow:visible"><use href="#clipF"/><text x="6" y="26" font-size="9" font-weight="700" fill="#444" font-family="Liberation Sans">123</text></svg>
      <svg width="22" height="27" style="overflow:visible"><use href="#clipF"/><text x="9" y="25" font-size="15" font-style="italic" fill="#333" font-family="Liberation Serif">fx</text></svg>
      <svg width="22" height="27"><use href="#clipF"/><path d="M8 14q4-6 8-1M15 17q-3 4-7 0" fill="none" stroke="#3f7cbf" stroke-width="1.500"/><path d="M16 8h5v10h-5zM3 19h9v7H3z" fill="#bcd0e8" stroke="#777"/></svg>
      <svg width="22" height="27" style="overflow:visible"><use href="#clipF"/><text x="5" y="16" font-size="10" font-weight="700" fill="#444" font-family="Liberation Sans">%</text><path d="M4 25q1-6 7-8l3 3q-2 5-10 5z" fill="#3f7cbf"/><path d="M13 18l7-8 1 2-6 8z" fill="#666"/></svg>
      <svg width="22" height="27"><use href="#clipF"/><path d="M5 20h5q2 0 2 2.500T10 25H6q-3 0-3-2.500T5 20zM12 20h5q3 0 3 2.500T17 25h-5" fill="none" stroke="#3f7cbf" stroke-width="2"/></svg>
    </div>
    <a class="dropdown-item m-sub m-sub2"><span class="m-ic"></span>选择性粘贴(<u>S</u>)...</a>
    <hr class="dropdown-divider dv2">
    <a class="dropdown-item"><span class="m-ic"><svg width="18" height="18"><use href="#smart"/></svg></span>智能查找(<u>L</u>)</a>
    <hr class="dropdown-divider">
    <a class="dropdown-item"><span class="m-ic"></span>插入复制的单元格(<u>E</u>)...</a>
    <a class="dropdown-item"><span class="m-ic"></span>删除(<u>D</u>)...</a>
    <a class="dropdown-item"><span class="m-ic"></span>清除内容(<u>N</u>)</a>
    <hr class="dropdown-divider">
    <a class="dropdown-item off"><span class="m-ic"><svg width="16" height="14"><use href="#quick"/></svg></span>快速分析(<u>Q</u>)</a>
    <a class="dropdown-item m-sub"><span class="m-ic"></span>筛选(<u>E</u>)</a>
    <a class="dropdown-item m-sub"><span class="m-ic"></span>排序(<u>O</u>)</a>
    <hr class="dropdown-divider">
    <a class="dropdown-item"><span class="m-ic"><svg width="16" height="16"><use href="#note"/></svg></span>插入批注(<u>M</u>)</a>
    <hr class="dropdown-divider">
    <a class="dropdown-item"><span class="m-ic"><svg width="16" height="17"><use href="#fmtc"/></svg></span>设置单元格格式(<u>F</u>)...</a>
    <a class="dropdown-item"><span class="m-ic"></span>从下拉列表中选择(<u>K</u>)...</a>
    <a class="dropdown-item"><span class="m-ic m-wen">wén<br><span>文</span></span>显示拼音字段(<u>S</u>)</a>
    <a class="dropdown-item"><span class="m-ic"></span>定义名称(<u>A</u>)...</a>
    <a class="dropdown-item"><span class="m-ic"><svg width="18" height="18"><use href="#link"/></svg></span>超链接(<u>I</u>)...</a>
  </div>

  <!-- red annotation arrow + mouse pointer -->
  <svg class="ov-arrow" width="160" height="110"><path d="M14 12l115 74" stroke="#e81010" stroke-width="4" stroke-linecap="round"/><path d="M142 97l-37-8 8-7 8-12z" fill="#e81010"/></svg>
  <svg class="ov-cursor" width="14" height="20"><path d="M1 1v15l4-3 3 6 3-1-3-6h5z" fill="#fff" stroke="#222"/></svg>

  <!-- watermark -->
  <div class="wm">
    <svg width="46" height="44" class="position-absolute top-0 start-0">
      <path d="M44 3Q14 2 6 20q-4 12 8 18-9-9-3-19Q18 8 44 3z" fill="#5aa0d8" opacity=".9"/>
      <path d="M16 21q10-7 19-3 2 10-5 16-10 7-20 4 12 0 17-7 4-6 0-10-5-2-11 0z" fill="#62b85a" opacity=".9"/>
      <path d="M11 39q10 1 17-4l-3 7q-8 1-14-3z" fill="#e8e060"/>
      <path d="M14 24q4-5 11-4-6 1-7 6t5 6q-10 0-9-8z" fill="#4a8fc8"/>
    </svg>
    <div class="wm-t1">极光下载站</div>
    <div class="wm-t2">www.xz7.com</div>
  </div>

</div>

</body>
</html>
